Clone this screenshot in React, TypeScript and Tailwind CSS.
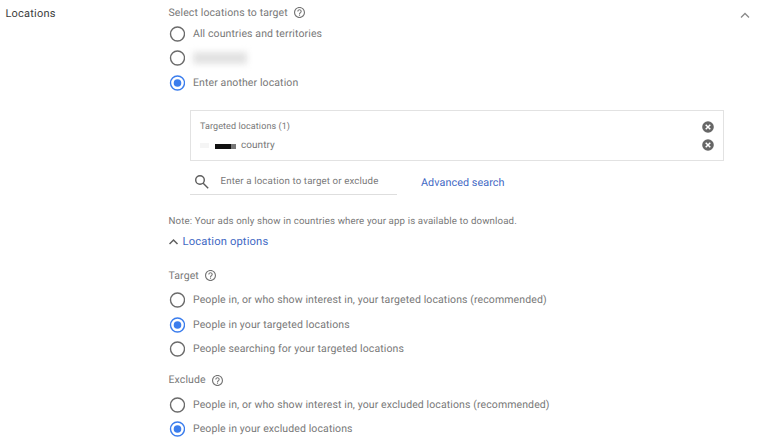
import React from "react";

function Radio({ checked }: { checked?: boolean }) {
  return (
    <svg className="h-4 w-4 shrink-0" viewBox="0 0 16 16" fill="none">
      <circle cx="8.500" cy="8" r="7" strokeWidth="1.4" className={checked ? "stroke-[#3b7ded]" : "stroke-[#6b6b6b]"} />
      {checked && <circle cx="8.500" cy="8" r="3.800" className="fill-[#3b7ded]" />}
    </svg>
  );
}

function Option({ checked, children }: { checked?: boolean; children: React.ReactNode }) {
  return (
    <label className="flex h-[24.5px] items-center gap-2 pl-[0.5px]">
      <Radio checked={checked} />
      <span className="whitespace-nowrap text-[10.5px] leading-4 tracking-[0.11px]">{children}</span>
    </label>
  );
}

function Help() {
  return (
    <svg className="h-[11px] w-[11px]" viewBox="2 2 20 20" fill="#747474">
      <path d="M11 18h2v-2h-2v2zm1-16C6.48 2 2 6.48 2 12s4.480 10 10 10 10-4.480 10-10S17.520 2 12 2zm0 18c-4.410 0-8-3.590-8-8s3.590-8 8-8 8 3.590 8 8-3.590 8-8 8zm0-14c-2.210 0-4 1.790-4 4h2c0-1.100.9-2 2-2s2 .9 2 2c0 2-3 1.750-3 5h2c0-2.250 3-2.500 3-5 0-2.210-1.790-4-4-4z" />
    </svg>
  );
}

function Heading({ children }: { children: React.ReactNode }) {
  return (
    <div className="flex h-4 items-center gap-[6.500px] text-[10.5px] leading-4 tracking-[0.11px]">
      <span>{children}</span>
      <Help />
    </div>
  );
}

function Remove() {
  return (
    <svg className="mb-[0.5px] h-3 w-3" viewBox="0 0 12 12">
      <circle cx="6" cy="6" r="5.8" fill="#666" />
      <path d="M3.700 3.700l4.600 4.600M8.300 3.700l-4.600 4.600" stroke="#fff" strokeWidth="1.5" />
    </svg>
  );
}

export default function App() {
  return (
    <main className="flex h-[448px] w-[770px] overflow-hidden bg-white font-[Roboto,sans-serif] text-[#787878] [text-rendering:geometricPrecision]">
      <h2 className="w-[168.5px] shrink-0 pl-[5.5px] pt-[6px] text-[11px] leading-4 tracking-[0.2px] text-[#3c3c3c]">Locations</h2>
      <section className="w-[555px] shrink-0 pt-[4.5px]">
        <Heading>Select locations to target</Heading>
        <div className="mt-[1px]">
          <Option>All countries and territories</Option>
          <Option>
            <span className="block h-3 w-[54px] bg-[#e2e2e2] blur-[3px]" />
          </Option>
          <Option checked>Enter another location</Option>
        </div>

        <div className="ml-[21.5px] mt-[15px] h-[51px] w-[534px] border border-[#e2e2e2] px-[9px] pt-[7.5px]">
          <div className="flex h-[18px] items-center justify-between">
            <span className="pt-px text-[9px] tracking-[0.1px]">Targeted locations (1)</span>
            <Remove />
          </div>
          <div className="flex h-[18px] items-center justify-between">
            <span className="flex items-center text-[10px] leading-4 tracking-[0.05px]">
              <span className="h-[5px] w-[9px] bg-[#f5f5f5]" />
              <span className="ml-[6px] mt-0.5 h-[5px] w-4 bg-[#111]" />
              <span className="mr-[5px] mt-0.5 h-[5px] w-[5px] bg-[#777]" />
              country
            </span>
            <Remove />
          </div>
        </div>

        <div className="ml-[21.5px] flex h-[34px] items-end">
          <div className="flex h-[26px] w-[207px] items-center border-b border-[#dedede] pl-1">
            <svg className="h-4 w-4" viewBox="0 0 16 16" fill="none" stroke="#5c5c5c" strokeWidth="1.4">
              <circle cx="6" cy="6" r="4.300" />
              <path d="M9.200 9.200l5 5" />
            </svg>
            <span className="ml-[10.5px] whitespace-nowrap pt-[2px] text-[9.7px] tracking-[0.14px]">Enter a location to target or exclude</span>
          </div>
          <a className="mb-[4.500px] ml-6 text-[10.8px] leading-4 tracking-[0.06px] text-[#3f69c4]">Advanced search</a>
        </div>

        <p className="mt-[18.5px] whitespace-nowrap text-[9.7px] leading-4 tracking-[0.13px]">Note: Your ads only show in countries where your app is available to download.</p>
        <div className="mt-[4.5px] flex h-4 items-center gap-1 text-[11.200px] leading-4 tracking-[0.15px] text-[#3f69c4]">
          <svg className="h-[10px] w-[10px]" viewBox="0 0 10 10" fill="none" stroke="#5f5f5f" strokeWidth="1.5">
            <path d="M0.500 7l4-4 4 4" />
          </svg>
          Location options
        </div>

        <div className="mt-[17.5px]">
          <Heading>Target</Heading>
          <div className="mt-[4.500px]">
            <Option>People in, or who show interest in, your targeted locations (recommended)</Option>
            <Option checked>People in your targeted locations</Option>
            <Option>People searching for your targeted locations</Option>
          </div>
        </div>
        <div className="mt-[10.500px]">
          <Heading>Exclude</Heading>
          <div className="mt-[4.500px]">
            <Option>People in, or who show interest in, your excluded locations (recommended)</Option>
            <Option checked>People in your excluded locations</Option>
          </div>
        </div>
      </section>
      <svg className="ml-[16.5px] mt-[10px] h-[10px] w-[10px]" viewBox="0 0 10 10" fill="none" stroke="#8a8a8a" strokeWidth="1.300">
        <path d="M1 7.500l4-4 4 4" />
      </svg>
    </main>
  );
}
